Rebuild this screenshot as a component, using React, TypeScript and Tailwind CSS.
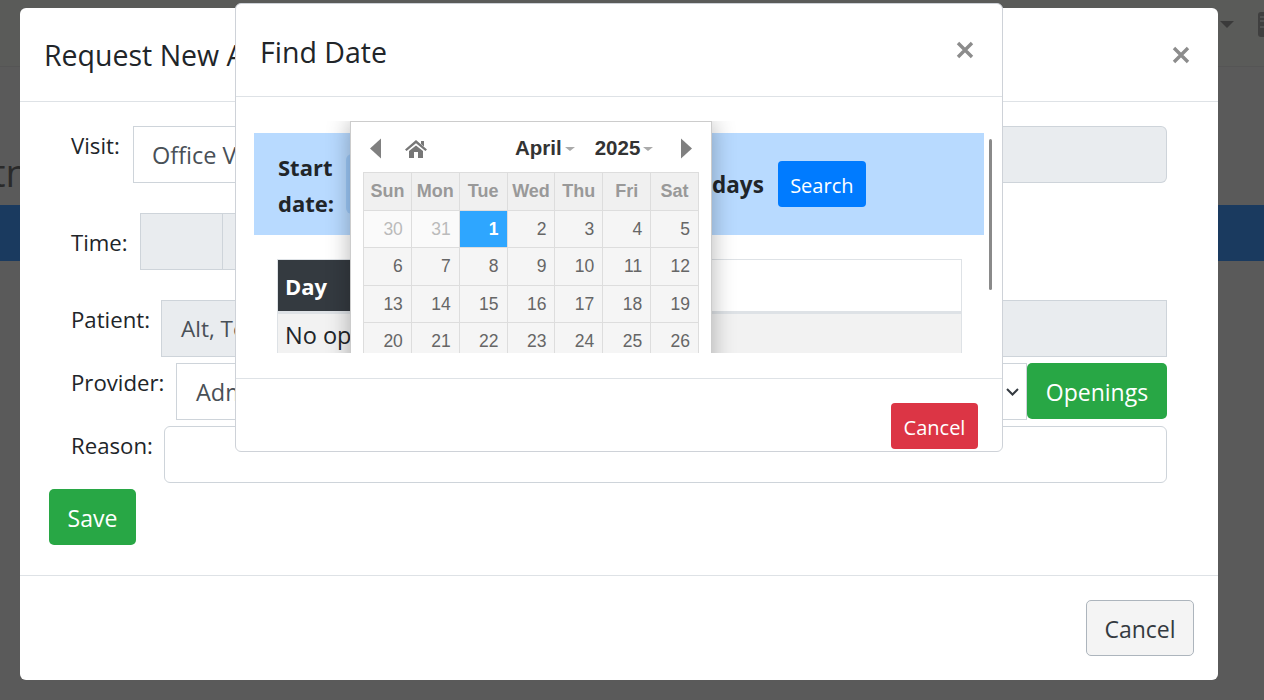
const weekdays = ["Sun", "Mon", "Tue", "Wed", "Thu", "Fri", "Sat"];
const days = [30, 31, 1, 2, 3, 4, 5, 6, 7, 8, 9, 10, 11, 12, 13, 14, 15, 16, 17, 18, 19, 20, 21, 22, 23, 24, 25, 26, 27, 28, 29, 30, 1, 2, 3];

function CloseMark({ className }: { className: string }) {
  return (
    <svg viewBox="0 0 18 18" className={className} fill="none" stroke="#8c8c8c" strokeWidth="3.4">
      <path d="M2 2l14 14M16 2L2 16" />
    </svg>
  );
}

function Calendar() {
  return (
    <div className="absolute left-[96px] top-0 w-[362px] border border-[#ccc] bg-white px-3 pt-1 font-['Liberation_Sans',Arial,sans-serif] shadow-[0_0_22px_rgba(0,0,0,0.3)]">
      <div className="-mt-[1px] mb-[1px] flex h-[46px] items-center text-[20.5px] font-bold text-[#333]">
        <svg viewBox="0 0 11 20" className="ml-[7px] h-[21px] w-[11px] fill-[#808080]">
          <path d="M11 0v20L0 10z" />
        </svg>
        <svg viewBox="0 0 22 18" className="ml-[24px] mt-[1px] h-[18px] w-[22px] fill-[#777]">
          <path d="M11 0l11 9.5-1.6 1.6L11 3.2 1.6 11.1 0 9.5z" />
          <path d="M16 1h3v5.5l-3-2.6zM4 11l7-5.6L18 11v7h-5v-6H9v6H4z" />
        </svg>
        <span className="ml-[88px]">April</span>
        <span className="ml-[3px] mt-[2px] h-0 w-0 border-x-[5px] border-t-[4px] border-x-transparent border-t-[#aaa]" />
        <span className="ml-[20px]">2025</span>
        <span className="ml-[3px] mt-[2px] h-0 w-0 border-x-[5px] border-t-[4px] border-x-transparent border-t-[#aaa]" />
        <svg viewBox="0 0 11 20" className="ml-[28px] h-[21px] w-[11px] fill-[#808080]">
          <path d="M0 0v20L11 10z" />
        </svg>
      </div>
      <div className="grid w-[336px] grid-cols-7 border-l border-t border-[#ddd] text-[17.5px]">
        {weekdays.map((d) => (
          <div key={d} className="flex h-[38px] items-center justify-center border-b border-r border-[#ddd] bg-[#f0f0f0] text-[18px] font-bold text-[#999]">
            {d}
          </div>
        ))}
        {days.map((d, i) => {
          const selected = i === 2;
          const faded = i < 2 || i > 31;
          const tall = Math.floor(i / 7) % 2 === 1;
          return (
            <div
              key={i}
              className={[
                "flex items-center justify-end border-b border-r border-[#ddd] pr-2",
                tall ? "h-[38px]" : "h-[37px]",
                selected ? "bg-[#2ea6ff] font-bold text-white" : faded ? "bg-[#fafafa] text-[#bbb]" : "bg-[#f5f5f5] text-[#666]",
              ].join(" ")}
            >
              {d}
            </div>
          );
        })}
      </div>
    </div>
  );
}

function FindDateModal() {
  return (
    <div className="absolute left-[235px] top-[3px] flex h-[449px] w-[768px] flex-col rounded-md border border-[#ced2d8] bg-white">
      <div className="flex h-[93px] items-center justify-between border-b border-[#dee2e6] pl-6 pr-[28px]">
        <h2 className="mt-[4px] text-[28.5px] text-[#212529]">Find Date</h2>
        <CloseMark className="h-[18px] w-[18px]" />
      </div>
      <div className="relative h-[281px] px-[18px] pt-[24px]">
        <div className="relative h-[232px] overflow-hidden">
          <div className="mt-3 flex h-[102px] w-[730px] items-center bg-[#b8daff] pl-6">
            <div className="mt-[1px] w-[68px] text-[22px] font-bold leading-[36px] text-[#212529]">Start date:</div>
            <div className="h-[60px] w-[340px] rounded-md bg-[#9cc8f8]" />
            <div className="ml-[26px] mt-[1px] text-[22.5px] font-bold text-[#212529]">days</div>
            <button className="ml-[14px] h-[46px] w-[88px] rounded-[4px] bg-[#007bff] pt-[3px] text-[20px] text-white">Search</button>
          </div>
          <div className="ml-[23px] mt-6 w-[685px] border-x border-t border-[#dee2e6]">
            <div className="flex h-[54px] border-b-[3px] border-[#dee2e6]">
              <div className="flex w-[200px] items-center bg-[#343a40] pl-[7px] pt-[1px] text-[22px] font-bold text-white">Day</div>
            </div>
            <div className="flex h-[60px] items-start bg-[#f2f2f2] pl-[7px] pt-[4px] text-[23.5px] text-[#212529]">No openings found</div>
          </div>
          <Calendar />
        </div>
        <div className="absolute right-[10px] top-[42px] h-[151px] w-[3px] rounded-full bg-[#8a8a8a]" />
      </div>
      <div className="flex flex-1 justify-end border-t border-[#dee2e6] pr-6 pt-6">
        <button className="h-[46px] w-[87px] rounded-[4px] bg-[#dc3545] pt-[3px] text-[20px] text-white">Cancel</button>
      </div>
    </div>
  );
}

function RequestModal() {
  return (
    <div className="absolute left-[20px] top-[8px] flex h-[672px] w-[1198px] flex-col rounded-md bg-white">
      <div className="flex h-[94px] items-center justify-between border-b border-[#dee2e6] pl-6 pr-[28px]">
        <h2 className="mt-[2px] text-[28.5px] text-[#212529]">Request New Appointment</h2>
        <CloseMark className="h-[18px] w-[18px]" />
      </div>
      <div className="flex h-[473px] flex-col pl-[29px] pr-[51px] pt-6 text-[22.2px] text-[#212529]">
        <div className="flex pl-[22px]">
          <label className="w-[62px] leading-[40px]">Visit:</label>
          <div className="flex h-[57px] flex-1 text-[23.5px]">
            <div className="flex w-[400px] items-center border border-[#ced4da] bg-white pl-[18px] pt-[3px] text-[#495057]">Office Visit</div>
            <div className="flex-1 rounded-r-md border-y border-r border-[#ced4da] bg-[#e9ecef]" />
          </div>
        </div>
        <div className="mt-[30px] flex items-center pl-[22px]">
          <label className="w-[69px] pt-[2px]">Time:</label>
          <div className="h-[57px] w-[83px] border border-[#ced4da] bg-[#e9ecef]" />
          <div className="h-[57px] w-[83px] border-y border-r border-[#ced4da] bg-[#e9ecef]" />
        </div>
        <div className="mt-[30px] flex pl-[22px]">
          <label className="w-[90px] leading-[39px]">Patient:</label>
          <div className="flex h-[57px] flex-1 items-center border border-[#ced4da] bg-[#e9ecef] pl-[19px] text-[22.5px] text-[#495057]">Alt, Test</div>
        </div>
        <div className="mt-[6px] flex pl-[22px]">
          <label className="w-[105px] leading-[39px]">Provider:</label>
          <div className="flex h-[57px] flex-1 items-center justify-between border border-[#ced4da] bg-white pl-[19px] pr-[7px] text-[23.5px] text-[#495057]">
            <span className="pt-[3px]">Admin</span>
            <svg viewBox="0 0 13 8" className="h-[8px] w-[13px]" fill="none" stroke="#343a40" strokeWidth="2">
              <path d="M1 1l5.5 5.5L12 1" />
            </svg>
          </div>
          <button className="h-[56px] w-[140px] rounded-[5px] bg-[#28a745] pt-[3px] text-[23px] text-white">Openings</button>
        </div>
        <div className="mt-[6px] flex pl-[22px]">
          <label className="w-[93px] leading-[39px]">Reason:</label>
          <div className="h-[57px] flex-1 rounded-md border border-[#ced4da] bg-white" />
        </div>
        <button className="mt-[6px] h-[56px] w-[87px] rounded-[5px] bg-[#28a745] pt-[3px] text-[23px] text-white">Save</button>
      </div>
      <div className="flex flex-1 justify-end border-t border-[#dee2e6] pr-6 pt-6">
        <button className="h-[56px] w-[108px] rounded-[5px] border border-[#adb5bd] bg-[#f4f4f4] pt-[3px] text-[23px] text-[#343a40]">Cancel</button>
      </div>
    </div>
  );
}

export default function App() {
  return (
    <div className="relative h-[700px] w-[1264px] overflow-hidden bg-[#5a5a5a] font-['Open_Sans',sans-serif]">
      <div className="flex h-[67px] items-center justify-end border-b border-[#555] bg-[#5a5b59] pb-[18px]">
        <span className="h-0 w-0 border-x-[7px] border-t-[7px] border-x-transparent border-t-[#3a3a3a]" />
        <svg viewBox="0 0 6 25" className="ml-[24px] h-[25px] w-[6px]">
          <path d="M6 0H3a3 3 0 0 0-3 3v19a3 3 0 0 0 3 3h3z" fill="#3f3f3f" />
          <path d="M2 5h4M2 9h4M2 15h4" stroke="#666" strokeWidth="1" />
        </svg>
      </div>
      <div className="-ml-[8px] mt-[80px] h-[58px] text-[38px] leading-[50px] text-[#2a2a2a]">tn</div>
      <div className="h-[56px] bg-[#1a3a5f]" />
      <RequestModal />
      <FindDateModal />
    </div>
  );
}
